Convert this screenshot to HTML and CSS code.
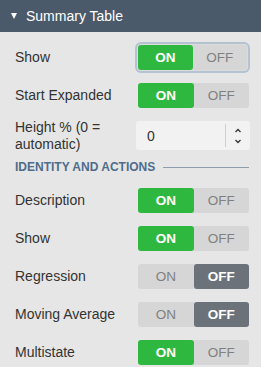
FILE: index.html
```html
<!DOCTYPE html>
<html lang="en">
<head>
    <meta charset="UTF-8">
    <title>Summary Table</title>
    <link rel="stylesheet" href="styles.css">
</head>
<body>
    <div class="panel">
        <div class="panel-head">
            <span class="caret"></span>
            <span>Summary Table</span>
        </div>

        <div class="panel-body">
            <div class="row">
                <div class="label">Show</div>
                <div class="toggle focused">
                    <span class="half on">ON</span>
                    <span class="half">OFF</span>
                </div>
            </div>

            <div class="row">
                <div class="label">Start Expanded</div>
                <div class="toggle">
                    <span class="half on">ON</span>
                    <span class="half">OFF</span>
                </div>
            </div>

            <div class="row tall">
                <div class="label">Height % (0 = automatic)</div>
                <div class="number">
                    <span class="value">0</span>
                    <span class="spin">
                        <svg width="8" height="18" viewBox="0 0 8 18">
                            <path d="M1.5 5 L4 2.5 L6.5 5" fill="none" stroke="#333" stroke-width="1.3"/>
                            <path d="M1.5 13 L4 15.5 L6.5 13" fill="none" stroke="#333" stroke-width="1.3"/>
                        </svg>
                    </span>
                </div>
            </div>

            <div class="section">
                <span class="section-title">IDENTITY AND ACTIONS</span>
                <span class="section-line"></span>
            </div>

            <div class="row">
                <div class="label">Description</div>
                <div class="toggle">
                    <span class="half on">ON</span>
                    <span class="half">OFF</span>
                </div>
            </div>

            <div class="row">
                <div class="label">Show</div>
                <div class="toggle">
                    <span class="half on">ON</span>
                    <span class="half">OFF</span>
                </div>
            </div>

            <div class="row">
                <div class="label">Regression</div>
                <div class="toggle">
                    <span class="half">ON</span>
                    <span class="half off">OFF</span>
                </div>
            </div>

            <div class="row">
                <div class="label">Moving Average</div>
                <div class="toggle">
                    <span class="half">ON</span>
                    <span class="half off">OFF</span>
                </div>
            </div>

            <div class="row">
                <div class="label">Multistate</div>
                <div class="toggle">
                    <span class="half on">ON</span>
                    <span class="half">OFF</span>
                </div>
            </div>
        </div>
    </div>
</body>
</html>
```

FILE: styles.css
```css
body {
    margin: 0;
    background: #e6e6e6;
    font-family: "Liberation Sans", Arial, sans-serif;
    color: #333;
}

.panel-head {
    height: 32px;
    display: flex;
    align-items: center;
    padding-left: 11px;
    background: #4b5a6b;
    color: #fff;
    font-size: 14px;
}

.caret {
    width: 0;
    height: 0;
    border-left: 3.5px solid transparent;
    border-right: 3.5px solid transparent;
    border-top: 6px solid #fff;
    margin-right: 9px;
}

.panel-body {
    padding: 6px 12px 0 15px;
}

.row {
    height: 38px;
    display: flex;
    align-items: center;
}

.row.tall {
    height: 43px;
}

.label {
    flex: 1;
    font-size: 14px;
    line-height: 17px;
    padding-right: 8px;
}

.toggle {
    width: 111px;
    height: 25px;
    display: flex;
    background: #d6d6d6;
    border-radius: 3px;
}

.toggle.focused {
    width: 109px;
    margin-right: 2px;
    box-shadow: 0 0 0 1px #dcdcdc, 0 0 0 3px #b3c3d2;
}

.half {
    flex: 1;
    display: flex;
    align-items: center;
    justify-content: center;
    font-size: 13.5px;
    color: #808080;
    border-radius: 3px;
}

.half.on {
    background: #2fb83f;
    color: #fff;
    font-weight: bold;
}

.half.off {
    background: #6b7279;
    color: #fff;
    font-weight: bold;
}

.number {
    width: 114px;
    height: 29px;
    margin-right: -1px;
    margin-left: -2px;
    display: flex;
    background: #f2f2f2;
    border-radius: 3px;
}

.value {
    flex: 1;
    display: flex;
    align-items: center;
    padding-left: 11px;
    font-size: 14px;
}

.spin {
    width: 24px;
    display: flex;
    align-items: center;
    justify-content: center;
    border-left: 1px solid #cfcfcf;
    margin: 3px 0;
}

.section {
    height: 20px;
    display: flex;
    align-items: center;
    margin-bottom: 4px;
}

.section-title {
    font-size: 12px;
    font-weight: bold;
    color: #4e6d8b;
    margin-right: 8px;
}

.section-line {
    flex: 1;
    height: 1px;
    background: #8e9dab;
}
```
